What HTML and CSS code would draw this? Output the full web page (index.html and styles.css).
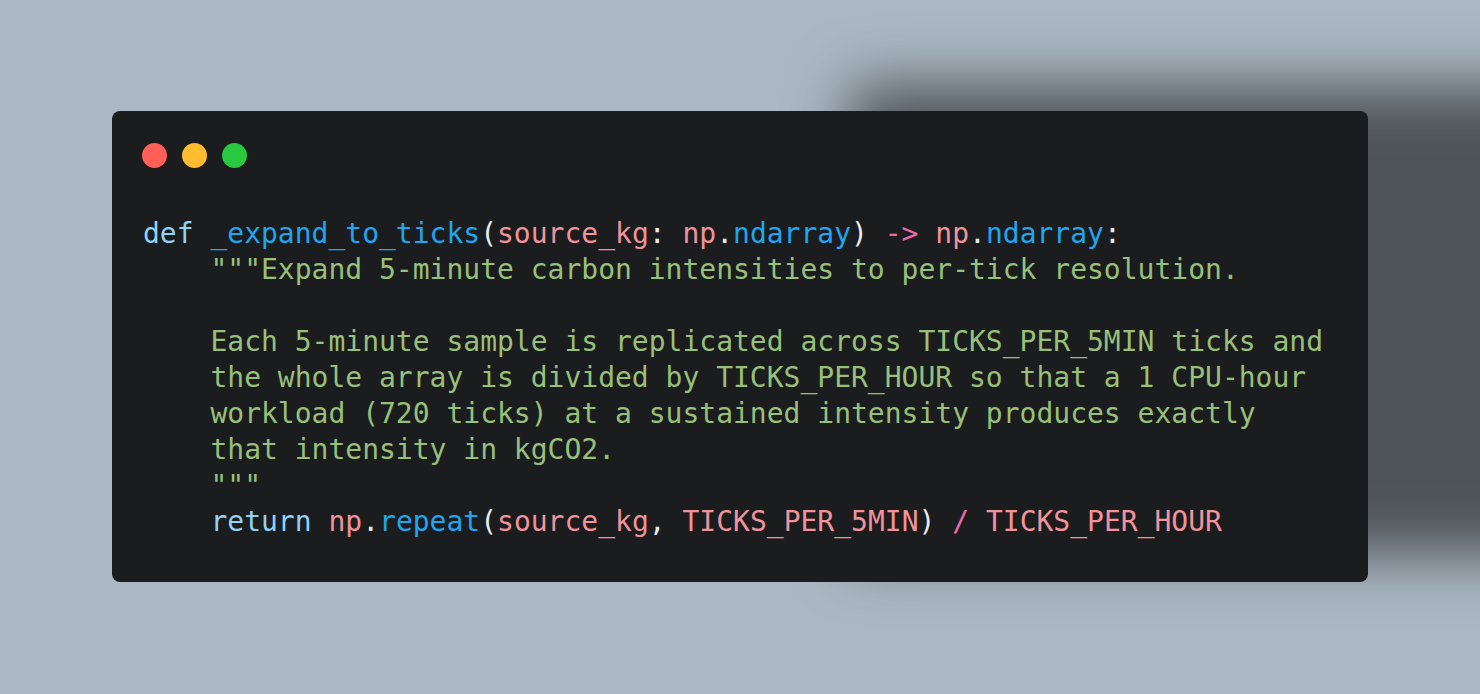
FILE: index.html
```html
<!DOCTYPE html>
<html>
<head>
<meta charset="utf-8">
<link rel="stylesheet" href="styles.css">
</head>
<body>
<div class="window">
  <div class="dots">
    <span class="dot red"></span>
    <span class="dot yellow"></span>
    <span class="dot green"></span>
  </div>
<pre class="code"><span class="kw">def</span> <span class="fn">_expand_to_ticks</span><span class="pn">(</span><span class="var">source_kg</span><span class="pn">:</span> <span class="var">np</span><span class="pn">.</span><span class="fn">ndarray</span><span class="pn">)</span> <span class="op">-&gt;</span> <span class="var">np</span><span class="pn">.</span><span class="fn">ndarray</span><span class="pn">:</span>
<span class="str">    """Expand 5-minute carbon intensities to per-tick resolution.

    Each 5-minute sample is replicated across TICKS_PER_5MIN ticks and
    the whole array is divided by TICKS_PER_HOUR so that a 1 CPU-hour
    workload (720 ticks) at a sustained intensity produces exactly
    that intensity in kgCO2.
    """</span>
    <span class="kw">return</span> <span class="var">np</span><span class="pn">.</span><span class="fn">repeat</span><span class="pn">(</span><span class="var">source_kg</span><span class="pn">,</span> <span class="var">TICKS_PER_5MIN</span><span class="pn">)</span> <span class="op">/</span> <span class="var">TICKS_PER_HOUR</span></pre>
</div>
</body>
</html>
```
FILE: styles.css
```css
html, body {
  margin: 0;
  padding: 0;
}
body {
  background: #abb8c3;
  width: 1480px;
  height: 694px;
  overflow: hidden;
  padding: 111px 112px;
  box-sizing: border-box;
}
.window {
  width: 1256px;
  height: 471px;
  box-sizing: border-box;
  background: #1b1c1e;
  border-radius: 8px;
  padding: 32px 30px 41px 30px;
  box-shadow: 738px -26px 60px rgba(0, 0, 0, 0.55);
}
.dots {
  display: flex;
  gap: 15px;
  height: 25px;
}
.dot {
  width: 25px;
  height: 25px;
  border-radius: 50%;
}
.red { background: #ff5f57; }
.yellow { background: #febc2e; }
.green { background: #28c840; }
.code {
  margin: 48px 0 0 0;
  padding-left: 1px;
  font-family: "DejaVu Sans Mono", "Liberation Mono", monospace;
  font-size: 28px;
  line-height: 36px;
  color: #e6e6e6;
  white-space: pre;
}
.kw { color: #8fd3f5; }
.fn { color: #1ea6ef; }
.var { color: #f0939b; }
.pn { color: #ececec; }
.op { color: #ee6aa7; }
.str { color: #98c07a; }
```
